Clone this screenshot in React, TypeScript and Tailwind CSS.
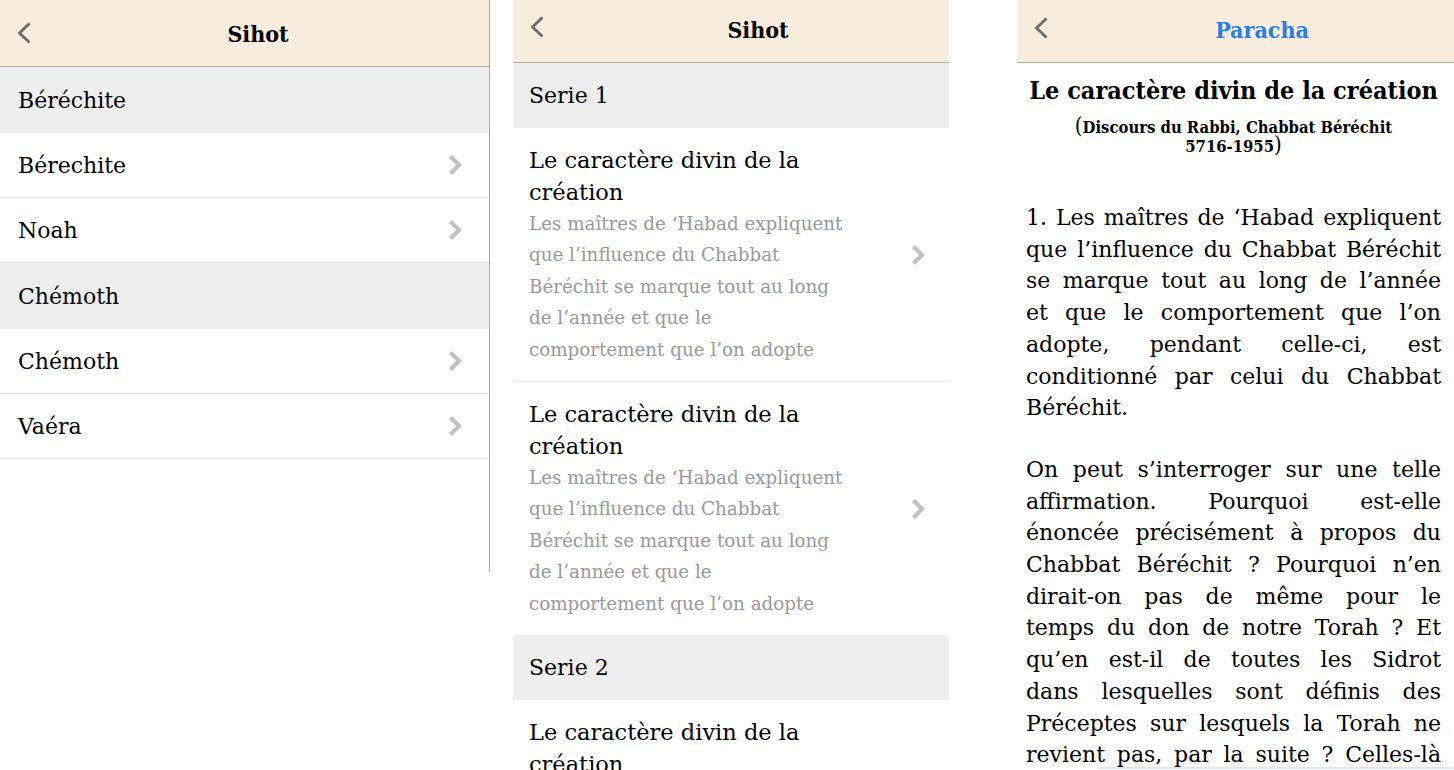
import React from "react";
import clsx from "clsx";

const SERIF = "font-['DejaVu_Serif','Noto_Serif',serif]";
const SERIF_BOLD =
  "font-['DejaVu_Serif_Condensed','DejaVu_Serif',serif] font-bold font-stretch-condensed";

function BackChevron() {
  return (
    <svg width="16" height="24" viewBox="0 0 16 24" className="shrink-0">
      <path d="M13.5 2.5L3.5 12l10 9.5" fill="none" stroke="#6b6b6b" strokeWidth="2.8" />
    </svg>
  );
}

function RowChevron() {
  return (
    <svg width="16" height="24" viewBox="0 0 16 24" className="shrink-0">
      <path d="M3.5 3.5l8.5 8.5-8.5 8.5" fill="none" stroke="#c0c0c0" strokeWidth="4.2" />
    </svg>
  );
}

function NavBar({
  title,
  className,
  titleClass,
  chevronClass,
}: {
  title: string;
  className: string;
  titleClass: string;
  chevronClass?: string;
}) {
  return (
    <header
      className={clsx(
        "flex shrink-0 items-center border-b border-[#b4b0aa] bg-[#f8eddd]",
        className
      )}
    >
      <div className={clsx("pl-[16px]", chevronClass)}>
        <BackChevron />
      </div>
      <h1 className={clsx("flex-1 text-center text-[23px] leading-none", SERIF_BOLD, titleClass)}>
        {title}
      </h1>
    </header>
  );
}

const parachot = [
  { section: "Béréchite", items: ["Bérechite", "Noah"] },
  { section: "Chémoth", items: ["Chémoth", "Vaéra"] },
];

const summary = [
  "Les maîtres de ‘Habad expliquent",
  "que l’influence du Chabbat",
  "Béréchit se marque tout au long",
  "de l’année et que le",
  "comportement que l’on adopte",
];

const series = [
  { name: "Serie 1", count: 2 },
  { name: "Serie 2", count: 1 },
];

const para1 = [
  "1. Les maîtres de ‘Habad expliquent",
  "que l’influence du Chabbat Béréchit",
  "se marque tout au long de l’année",
  "et que le comportement que l’on",
  "adopte, pendant celle-ci, est",
  "conditionné par celui du Chabbat",
  "Béréchit.",
];

const para2 = [
  "On peut s’interroger sur une telle",
  "affirmation. Pourquoi est-elle",
  "énoncée précisément à propos du",
  "Chabbat Béréchit ? Pourquoi n’en",
  "dirait-on pas de même pour le",
  "temps du don de notre Torah ? Et",
  "qu’en est-il de toutes les Sidrot",
  "dans lesquelles sont définis des",
  "Préceptes sur lesquels la Torah ne",
  "revient pas, par la suite ? Celles-là",
];

function Paragraph({
  lines,
  className,
  justifyLast,
}: {
  lines: string[];
  className?: string;
  justifyLast?: boolean;
}) {
  return (
    <p className={className}>
      {lines.map((line, i) => (
        <span
          key={i}
          className={clsx(
            "block",
            (i < lines.length - 1 || justifyLast) && "text-justify [text-align-last:justify]"
          )}
        >
          {line}
        </span>
      ))}
    </p>
  );
}

function SihotList() {
  return (
    <div className={clsx("flex h-[572px] w-[490px] shrink-0 flex-col border-r border-[#a8a8a8]", SERIF)}>
      <NavBar title="Sihot" className="h-[67px]" titleClass="pr-[5px] pt-[1px]" chevronClass="pl-[16px]" />
      {parachot.map((group) => (
        <div key={group.section}>
          <div className="flex h-[66px] items-center bg-[#eeeeee] pl-[18px] text-[22px] text-black">
            {group.section}
          </div>
          {group.items.map((item) => (
            <div
              key={item}
              className="flex h-[65px] items-center justify-between border-b border-[#e6e6e6] pl-[18px] pr-[26px] text-[22px] text-black"
            >
              <span>{item}</span>
              <RowChevron />
            </div>
          ))}
        </div>
      ))}
    </div>
  );
}

function SihotSeries() {
  return (
    <div className={clsx("flex h-[770px] w-[436px] shrink-0 flex-col overflow-hidden", SERIF)}>
      <NavBar title="Sihot" className="h-[63px]" titleClass="pl-[22px] pb-[4px]" chevronClass="pb-[8px]" />
      {series.map((serie) => (
        <div key={serie.name}>
          <div className="flex h-[65px] items-center bg-[#eeeeee] pl-[16px] text-[22px] text-black">
            {serie.name}
          </div>
          {Array.from({ length: serie.count }).map((_, i) => (
            <div
              key={i}
              className={clsx(
                "flex items-center justify-between py-[16px] pl-[16px] pr-[23px]",
                i < serie.count - 1 && "border-b border-[#e8e8e8]"
              )}
            >
              <div>
                <div className="text-[22.5px] leading-[32px] text-black">
                  <div className="whitespace-nowrap">Le caractère divin de la</div>
                  <div className="whitespace-nowrap">création</div>
                </div>
                <div className="text-[18.3px] leading-[31.4px] text-[#999999]">
                  {summary.map((line) => (
                    <div key={line} className="whitespace-nowrap">
                      {line}
                    </div>
                  ))}
                </div>
              </div>
              <RowChevron />
            </div>
          ))}
        </div>
      ))}
    </div>
  );
}

function Reader() {
  return (
    <div className={clsx("relative flex h-[770px] w-[437px] shrink-0 flex-col overflow-hidden", SERIF)}>
      <NavBar
        title="Paracha"
        className="h-[63px]"
        titleClass="pl-[21px] pb-[3px] text-[#2a7de1]"
        chevronClass="pb-[6px]"
      />
      <article className="pl-[9px] pr-[13px] text-black">
        <h2 className={clsx("mt-[12px] text-center text-[25px] leading-[32px] text-black", SERIF_BOLD)}>
          Le caractère divin de la création
        </h2>
        <div className={clsx("mt-[10px] text-center text-[16.5px] leading-[17px] text-black", SERIF_BOLD)}>
          <span className="text-[22px] font-normal">(</span>Discours du Rabbi, Chabbat Béréchit
          <br />
          5716-1955<span className="text-[22px] font-normal">)</span>
        </div>
        <div className="mt-[47px] text-[22px] leading-[31.7px]">
          <Paragraph lines={para1} />
          <Paragraph lines={para2} className="mt-[30px]" justifyLast />
        </div>
      </article>
      <div className="absolute bottom-[1px] left-[81px] right-0 h-[2px] bg-[#dde6f4]" />
    </div>
  );
}

export default function App() {
  return (
    <div className="flex h-[770px] w-[1454px] overflow-hidden bg-white">
      <SihotList />
      <div className="w-[23px] shrink-0" />
      <SihotSeries />
      <div className="w-[68px] shrink-0" />
      <Reader />
    </div>
  );
}
